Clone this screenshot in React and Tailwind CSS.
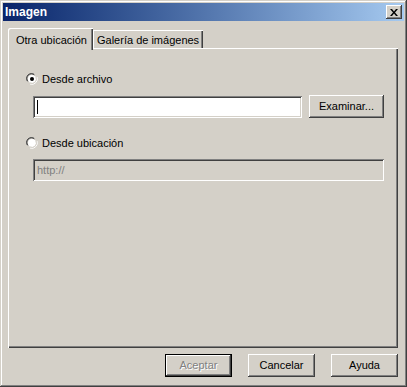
import React from "react"

const raised = "shadow-[inset_-1px_-1px_0_#404040,inset_1px_1px_0_#ffffff,inset_-2px_-2px_0_#808080,inset_2px_2px_0_#d4d0c8]"
const sunken = "shadow-[inset_1px_1px_0_#808080,inset_-1px_-1px_0_#ffffff,inset_2px_2px_0_#404040,inset_-2px_-2px_0_#d4d0c8]"

function Radio({ checked }) {
  return (
    <svg width="12" height="12" viewBox="0 0 12 12" className="shrink-0">
      <path d="M1 8 A5.5 5.5 0 0 1 8 1" fill="none" stroke="#808080" strokeWidth="1" />
      <path d="M2 8.5 A4.5 4.5 0 0 1 8.5 2" fill="none" stroke="#404040" strokeWidth="1" />
      <circle cx="6" cy="6" r="4" fill="#ffffff" />
      <path d="M11 4 A5.5 5.5 0 0 1 4 11" fill="none" stroke="#ffffff" strokeWidth="1" />
      <path d="M10 4 A4.5 4.5 0 0 1 4 10" fill="none" stroke="#d4d0c8" strokeWidth="1" />
      {checked && <circle cx="6" cy="6" r="2" fill="#000000" />}
    </svg>
  )
}

function Button({ children, isDefault, disabled, className = "" }) {
  return (
    <div className={`h-[23px] flex items-center justify-center bg-[#d4d0c8] ${isDefault ? "border border-black" : ""} ${className}`}>
      <div className={`w-full h-full flex items-center justify-center ${raised}`}>
        <span className={disabled ? "text-[#808080] [text-shadow:1px_1px_0_#ffffff]" : "text-black"}>{children}</span>
      </div>
    </div>
  )
}

export default function App() {
  return (
    <div className={`w-[407px] h-[387px] bg-[#d4d0c8] p-[3px] flex flex-col font-['Liberation_Sans',Arial,sans-serif] text-[11px] text-black shadow-[inset_-1px_-1px_0_#404040,inset_1px_1px_0_#d4d0c8,inset_-2px_-2px_0_#808080,inset_2px_2px_0_#ffffff]`}>
      {/* barra de título */}
      <div className="h-[18px] flex items-center justify-between pl-[2px] pr-[2px] bg-gradient-to-r from-[#0a246a] to-[#a6caf0]">
        <span className="text-white font-bold text-[12px] leading-none">Imagen</span>
        <div className={`w-[16px] h-[14px] bg-[#d4d0c8] flex items-center justify-center ${raised}`}>
          <svg width="8" height="7" viewBox="0 0 8 7">
            <path d="M0 0h2l2 2.5L6 0h2L5 3.5 8 7H6L4 4.5 2 7H0l3-3.5z" fill="#000000" />
          </svg>
        </div>
      </div>

      <div className="flex-1 flex flex-col pl-[5px] pr-[6px] pt-[7px]">
        {/* pestañas */}
        <div className="h-[20px] flex items-end relative z-10">
          <div className="h-[22px] -mb-[2px] w-[85px] pl-[8px] pt-[4px] bg-[#d4d0c8] rounded-tl-[2px] shadow-[inset_1px_1px_0_#ffffff,inset_-1px_0_0_#404040,inset_-2px_0_0_#808080]">
            Otra ubicación
          </div>
          <div className="h-[18px] w-[110px] pl-[4px] pt-[2px] bg-[#d4d0c8] shadow-[inset_1px_1px_0_#ffffff,inset_-1px_0_0_#404040,inset_-2px_0_0_#808080]">
            Galería de imágenes
          </div>
        </div>

        {/* panel */}
        <div className={`h-[300px] flex flex-col pl-[18px] pr-[14px] pt-[25px] shadow-[inset_1px_1px_0_#ffffff,inset_-1px_-1px_0_#404040,inset_-2px_-2px_0_#808080]`}>
          <div className="flex items-center gap-[4px] h-[12px]">
            <Radio checked />
            <span>Desde archivo</span>
          </div>
          <div className="flex items-center gap-[7px] mt-[10px] pl-[7px]">
            <div className={`flex-1 h-[22px] bg-white ${sunken} flex items-center pl-[4px]`}>
              <div className="w-px h-[14px] bg-black" />
            </div>
            <Button className="w-[75px]">Examinar...</Button>
          </div>

          <div className="flex items-center gap-[4px] h-[12px] mt-[19px]">
            <Radio />
            <span>Desde ubicación</span>
          </div>
          <div className={`mt-[10px] ml-[7px] h-[22px] bg-[#d4d0c8] ${sunken} flex items-center pl-[4px] text-[#808080]`}>
            http://
          </div>
        </div>

        {/* botones */}
        <div className="flex justify-end gap-[16px] mt-[6px]">
          <Button isDefault disabled className="w-[67px]">Aceptar</Button>
          <Button className="w-[67px]">Cancelar</Button>
          <Button className="w-[67px]">Ayuda</Button>
        </div>
      </div>
    </div>
  )
}
